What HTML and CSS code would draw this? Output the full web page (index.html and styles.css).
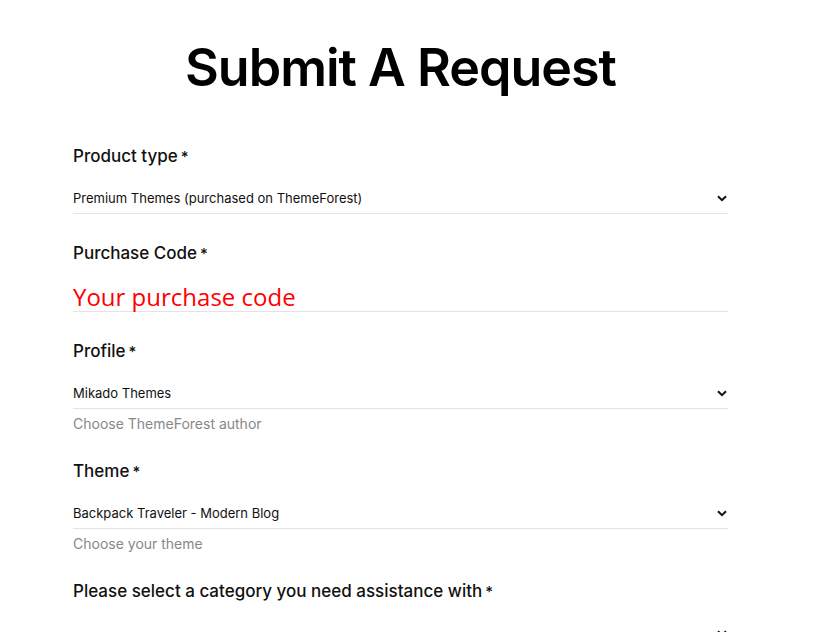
FILE: index.html
```html
<!DOCTYPE html>
<html lang="en">
<head>
<meta charset="utf-8">
<title>Submit A Request</title>
<link rel="stylesheet" href="styles.css">
</head>
<body>
<main class="page">
  <h1 class="title">Submit A Request</h1>
  <form class="form">
    <div class="field">
      <label class="label">Product type<span class="req">*</span></label>
      <div class="select">
        <span class="value">Premium Themes (purchased on ThemeForest)</span>
        <svg class="chev" width="10" height="7" viewBox="0 0 10 7"><polyline points="1,1.2 5,5.2 9,1.2" fill="none" stroke="#111" stroke-width="2"/></svg>
      </div>
    </div>
    <div class="field">
      <label class="label">Purchase Code<span class="req">*</span></label>
      <div class="input"><span class="placeholder">Your purchase code</span></div>
    </div>
    <div class="field">
      <label class="label">Profile<span class="req">*</span></label>
      <div class="select">
        <span class="value">Mikado Themes</span>
        <svg class="chev" width="10" height="7" viewBox="0 0 10 7"><polyline points="1,1.2 5,5.2 9,1.2" fill="none" stroke="#111" stroke-width="2"/></svg>
      </div>
      <div class="help">Choose ThemeForest author</div>
    </div>
    <div class="field">
      <label class="label">Theme<span class="req">*</span></label>
      <div class="select">
        <span class="value">Backpack Traveler - Modern Blog</span>
        <svg class="chev" width="10" height="7" viewBox="0 0 10 7"><polyline points="1,1.2 5,5.2 9,1.2" fill="none" stroke="#111" stroke-width="2"/></svg>
      </div>
      <div class="help">Choose your theme</div>
    </div>
    <div class="field">
      <label class="label">Please select a category you need assistance with<span class="req">*</span></label>
      <div class="select">
        <span class="value"></span>
        <svg class="chev" width="10" height="7" viewBox="0 0 10 7"><polyline points="1,1.2 5,5.2 9,1.2" fill="none" stroke="#111" stroke-width="2"/></svg>
      </div>
    </div>
  </form>
</main>
</body>
</html>
```

FILE: styles.css
```css
html, body {
  margin: 0;
  padding: 0;
  background: #fff;
}
body {
  font-family: Inter, "Noto Sans", sans-serif;
  color: #111;
  overflow: hidden;
}
.page {
  width: 655px;
  margin: 0 0 0 73px;
}
.title {
  margin: 0;
  padding-top: 37px;
  height: 108px;
  box-sizing: border-box;
  text-align: center;
  font-size: 52px;
  line-height: 62px;
  font-weight: 600;
  letter-spacing: -1px;
  color: #000;
}
.form {
  display: flex;
  flex-direction: column;
  gap: 27px;
  padding-top: 36px;
}
.field {
  display: flex;
  flex-direction: column;
}
.label {
  font-size: 17px;
  line-height: 24px;
  font-weight: 450;
  color: #111;
  margin-bottom: 19px;
}
.req {
  font-size: 15px;
  margin-left: 3px;
}
.select {
  display: flex;
  justify-content: space-between;
  align-items: center;
  height: 20px;
  padding-bottom: 5px;
  border-bottom: 1px solid #e3e3e3;
}
.value {
  font-size: 13px;
  line-height: 20px;
  color: #111;
}
.chev {
  margin-right: 1px;
  margin-top: 0;
}
.input {
  height: 28px;
  border-bottom: 1px solid #e3e3e3;
  margin-top: -2px;
}
.placeholder {
  font-family: "Open Sans", sans-serif;
  font-size: 24px;
  line-height: 28px;
  color: #f00;
}
.help {
  margin-top: 5px;
  margin-bottom: -2px;
  font-size: 14px;
  line-height: 20px;
  color: #888;
}
```
